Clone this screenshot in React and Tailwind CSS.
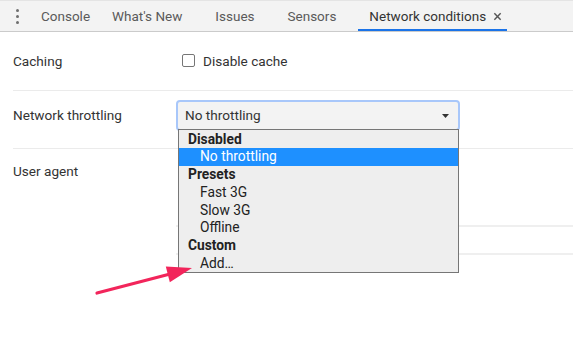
import React from 'react';

const font = { fontFamily: 'Roboto, "Liberation Sans", sans-serif' };

function Kebab() {
  return (
    <div className="flex w-[30px] flex-col items-center gap-[3px] pl-[4px]">
      <span className="block h-[3px] w-[3px] rounded-full bg-[#6e6e6e]" />
      <span className="block h-[3px] w-[3px] rounded-full bg-[#6e6e6e]" />
      <span className="block h-[3px] w-[3px] rounded-full bg-[#6e6e6e]" />
    </div>
  );
}

function TabBar() {
  return (
    <div className="flex h-[32px] items-stretch border-t border-b border-t-[#e4e4e4] border-b-[#cbcbcb] bg-[#f3f3f3] text-[13.5px] text-[#5a5a5a]">
      <div className="flex items-center">
        <Kebab />
      </div>
      <div className="flex items-center pl-[11px] pr-[11px]">Console</div>
      <div className="flex items-center pl-[11px] pr-[16px]">What's New</div>
      <div className="flex items-center pl-[17px] pr-[16px]">Issues</div>
      <div className="flex items-center pl-[17px] pr-[22px]">Sensors</div>
      <div className="flex items-center gap-[7px] border-b-2 border-[#1a73e8] pl-[11px] pr-[5px] pt-[2px] text-[#333]">
        <span>Network conditions</span>
        <svg width="9" height="9" viewBox="0 0 10 10">
          <path d="M1.5 1.5 L8.5 8.5 M8.5 1.5 L1.5 8.5" stroke="#555" strokeWidth="1.6" />
        </svg>
      </div>
    </div>
  );
}

function Dropdown() {
  const rows = [
    { t: 'Disabled', head: true },
    { t: 'No throttling', sel: true },
    { t: 'Presets', head: true },
    { t: 'Fast 3G' },
    { t: 'Slow 3G' },
    { t: 'Offline' },
    { t: 'Custom', head: true },
    { t: 'Add…' },
  ];
  return (
    <div className="absolute left-[178px] top-[129px] w-[281px] border border-[#767676] bg-[#eeeeee] text-[13.8px]">
      {rows.map((r) => (
        <div
          key={r.t}
          className={`flex h-[17.75px] items-center ${r.head ? 'pl-[9px] font-bold text-[#222]' : 'pl-[21px] text-[#222]'} ${r.sel ? 'bg-[#1e90ff] text-white' : ''}`}
        >
          {r.t}
        </div>
      ))}
    </div>
  );
}

function Arrow() {
  return (
    <svg className="absolute left-0 top-0" width="573" height="348" viewBox="0 0 573 348">
      <line x1="97" y1="293" x2="172" y2="273.5" stroke="#f2255b" strokeWidth="3.2" strokeLinecap="round" />
      <polygon points="192,268 165.8,266.5 169.8,282.3" fill="#f2255b" />
    </svg>
  );
}

export default function App() {
  return (
    <div className="relative h-[348px] w-[573px] overflow-hidden bg-white text-[13.6px] text-[#333]" style={font}>
      <TabBar />
      <div className="pl-[13px]">
        <div className="flex h-[59px] items-center border-b border-[#ebebeb]">
          <div className="w-[163px]">Caching</div>
          <div className="flex items-center gap-[8px] pl-[6px]">
            <span className="block h-[13px] w-[13px] rounded-[2px] border border-[#767676] bg-white" />
            <span>Disable cache</span>
          </div>
        </div>
        <div className="flex h-[58px] items-start border-b border-[#ebebeb]">
          <div className="w-[163px] pt-[14px]">Network throttling</div>
          <div className="pt-[9px]">
            <div className="flex h-[31px] w-[284px] items-center justify-between rounded-[4px] border-2 border-[#a8c7fa] bg-[#f3f3f3] pl-[7px] pr-[9px]">
              <span>No throttling</span>
              <svg width="7" height="4" viewBox="0 0 7 4">
                <path d="M0 0 L7 0 L3.5 4 Z" fill="#333" />
              </svg>
            </div>
          </div>
        </div>
        <div className="flex h-[120px] items-start">
          <div className="w-[163px] pt-[12px]">User agent</div>
          <div className="flex flex-1 flex-col pt-[76px]">
            <div className="h-[28px] border-t-2 border-[#efefef]" />
            <div className="border-t-2 border-[#efefef]" />
          </div>
        </div>
      </div>
      <Dropdown />
      <Arrow />
    </div>
  );
}
